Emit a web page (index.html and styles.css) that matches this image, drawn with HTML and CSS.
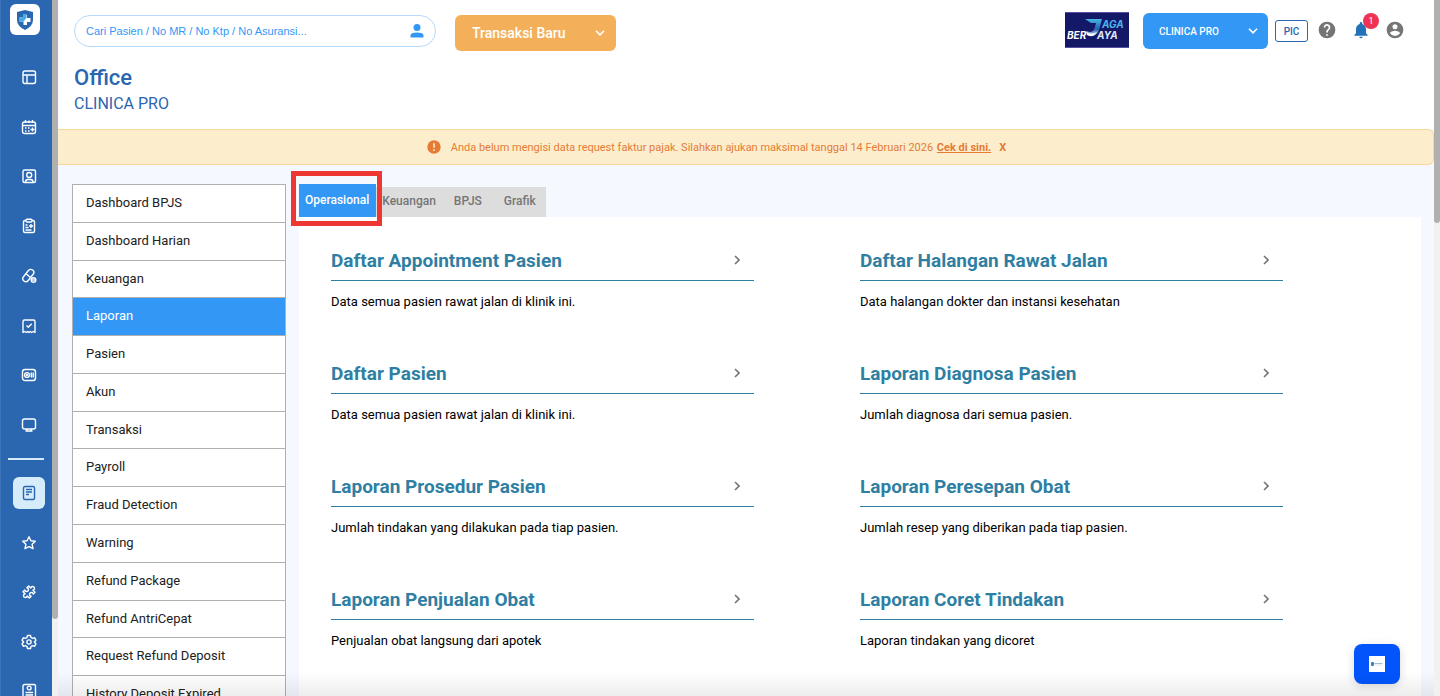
FILE: index.html
```html
<!doctype html>
<html lang="id">

<head>
  <meta charset="UTF-8">
  <title>Office - Clinica Pro</title>
  <link rel="stylesheet" href="styles.css">
</head>

<body>
  <aside class="sidebar">
    <a class="brand" href="#" aria-label="Home">
      <svg width="20" height="22" viewBox="0 0 20 22">
        <path d="M10 1 L18 3 V11 Q18 17 10 21 Q2 17 2 11 V3 Z" fill="#2b66b1"/>
        <path d="M8.500 6 h3.500 v3 h3.500 v4 h-3.500 v3 h-3.500 v-3.500 h-4 v-4 h4 z" fill="#fff"/>
        <path d="M8 5 h3.500 v4 l-3 3.500 h-4.500 v-4 h4 z" fill="#46aee6"/>
      </svg>
    </a>
    <nav class="nav-group nav-top" aria-label="Modules">
      <a href="#" aria-label="Dashboard"><svg class="icon" viewBox="0 0 16 16"><rect x="2" y="2" width="12.500" height="12.500" rx="2"/><path d="M2 6 H14.500 M6 6 V14.500"/></svg></a>
      <a href="#" aria-label="Appointment"><svg class="icon" viewBox="0 0 16 16"><rect x="1.500" y="3" width="13" height="11.500" rx="2"/><path d="M1.500 6.500 H14.500 M4.500 1 V4 M8 1.500 V4 M11.500 1 V4 M4 9 h1.500 M7 9 h1.500 M4 12 h1.500 M7 12 h1.500 M9.500 10.500 h4 M11.500 8.500 v4"/></svg></a>
      <a href="#" aria-label="Patients"><svg class="icon" viewBox="0 0 16 16"><rect x="2" y="2" width="12.500" height="12.500" rx="1.500"/><circle cx="8.200" cy="7" r="2.500"/><path d="M4.500 14 Q4.500 11.500 7 11.500 H9.500 Q12 11.500 12 14"/></svg></a>
      <a href="#" aria-label="Medical record"><svg class="icon" viewBox="0 0 16 16"><path d="M5 2.500 H4 Q2.500 2.500 2.500 4 V13 Q2.500 14.500 4 14.500 H12 Q13.500 14.500 13.500 13 V4 Q13.500 2.500 12 2.500 H11"/><rect x="5" y="1.200" width="6" height="2.800" rx="1"/><path d="M4.500 7 h2 M4.500 9.500 h3 M4.500 12 h6 M10 6 v4 M8 8 h4"/></svg></a>
      <a href="#" aria-label="Pharmacy"><svg class="icon" viewBox="0 0 16 16"><rect x="4.300" y="0.500" width="6" height="14" rx="3" transform="rotate(38 7.300 7.500)"/><path d="M5 5.800 L9.500 9.500"/><circle cx="12.500" cy="12" r="2.300"/><path d="M10.500 12 h4"/></svg></a>
      <a href="#" aria-label="Billing"><svg class="icon" viewBox="0 0 16 16"><path d="M2 14.500 V3.500 Q2 2 3.500 2 H12.500 Q14 2 14 3.500 V14.500 L12.300 13.500 L10.700 14.500 L9.300 13.500 L8 14.500 L6.700 13.500 L5.300 14.500 L3.700 13.500 Z M5.500 7.500 L7.300 9.300 L10.700 5.800"/></svg></a>
      <a href="#" aria-label="Cashier"><svg class="icon" viewBox="0 0 16 16"><rect x="1.500" y="2.500" width="13" height="11" rx="2.500"/><circle cx="6" cy="8" r="2.400"/><circle cx="6" cy="8" r="0.500"/><path d="M10.300 5.500 V10.500 M12.200 5.500 V10.500"/></svg></a>
      <a href="#" aria-label="Monitor"><svg class="icon" viewBox="0 0 16 16"><rect x="1.500" y="2" width="13" height="10" rx="2"/><path d="M6 12 L5.500 14 M10 12 L10.500 14 M4.500 14 H11.500"/></svg></a>
    </nav>
    <hr class="nav-line">
    <nav class="nav-group nav-bottom" aria-label="Tools">
      <a class="active" href="#" aria-label="Office"><svg class="icon" viewBox="0 0 16 16"><rect x="2.500" y="1.500" width="11" height="13" rx="1.500"/><path d="M5 4.500 h6 M5 7 h6 M5 9.500 h3"/></svg></a>
      <a href="#" aria-label="Favourites"><svg class="icon" viewBox="0 0 16 16"><path d="M8 1.800 L9.900 5.800 L14.300 6.300 L11.100 9.300 L12 13.700 L8 11.600 L4 13.700 L4.900 9.300 L1.700 6.300 L6.100 5.800 Z"/></svg></a>
      <a href="#" aria-label="Extensions"><svg class="icon" viewBox="0 0 16 16"><path transform="rotate(45 8 8)" d="M3.500 4 H6.500 A1.900 1.900 0 1 1 9.500 4 H12.500 V6.500 A1.900 1.900 0 1 0 12.500 9.500 V12 H9.500 A1.900 1.900 0 1 1 6.500 12 H3.500 V9.500 A1.900 1.900 0 1 0 3.500 6.500 Z"/></svg></a>
      <a href="#" aria-label="Settings"><svg class="icon" viewBox="0 0 16 16"><path d="M6.500 1.500 h3 l0.500 2 1.500 0.800 2 -0.600 1.400 2.500 -1.500 1.800 1.500 1.800 -1.400 2.500 -2 -0.600 -1.500 0.800 -0.500 2 h-3 l-0.500 -2 -1.500 -0.800 -2 0.600 -1.400 -2.500 1.500 -1.800 -1.500 -1.800 1.400 -2.500 2 0.600 1.500 -0.800 z"/><circle cx="8" cy="8" r="2.100"/></svg></a>
      <a href="#" aria-label="Profile"><svg class="icon" viewBox="0 0 16 16"><rect x="2" y="1.500" width="12.500" height="13" rx="1.500"/><circle cx="8.200" cy="5" r="1.900"/><path d="M4.500 9.500 h7.500 M4.500 12 h7.500"/></svg></a>
    </nav>
  </aside>
  <div class="scrollbar side-scroll"><i></i></div>

  <div class="page">
    <header class="header">
      <div class="topbar">
        <div class="search">
          <input type="search" placeholder="Cari Pasien / No MR / No Ktp / No Asuransi..." aria-label="Cari Pasien">
          <svg width="14" height="14" viewBox="0 0 14 14" fill="#3397f5"><circle cx="7" cy="3.500" r="3.500"/><path d="M0.500 13.500 V11.500 Q0.500 8.500 7 8.500 T13.500 11.500 V13.500 Z"/></svg>
        </div>
        <button class="btn btn-orange" type="button">Transaksi Baru
          <svg class="caret" viewBox="0 0 10 6"><path d="M1 0.800 L5 4.800 L9 0.800"/></svg>
        </button>

        <div class="account">
          <svg class="clinic-logo" width="64" height="36" viewBox="0 0 64 36" role="img" aria-label="Jaga Berjaya">
            <defs>
              <linearGradient id="swoosh" x1="0" y1="0" x2="0" y2="1">
                <stop offset="0" stop-color="#48b4e6"/>
                <stop offset="0.600" stop-color="#2561ad"/>
                <stop offset="1" stop-color="#e4edf8"/>
              </linearGradient>
            </defs>
            <rect width="64" height="36" fill="#131867"/>
            <path d="M0 0.500 H64 M0 35.500 H64" stroke="#5551a0"/>
            <path d="M20 7 H37 L34 18 Q31 25 25 24 Q22 23 22 19 Q28 22 30 15 L31 11 H26 Z" fill="url(#swoosh)"/>
            <path d="M21 19 Q25 24 32 20 Q27 26 22 23 Z" fill="#fff"/>
            <text x="37" y="16" fill="#4db4e7">AGA</text>
            <text x="2" y="27" fill="#fff">BER</text>
            <text x="32" y="27" fill="#dfe6f5">AYA</text>
          </svg>
          <button class="btn btn-blue" type="button">CLINICA PRO
            <svg class="caret" viewBox="0 0 10 6"><path d="M1 0.800 L5 4.800 L9 0.800"/></svg>
          </button>
          <button class="pic" type="button">PIC</button>
          <button class="icon-btn" type="button" aria-label="Help">
            <svg width="20" height="20" viewBox="0 0 24 24" fill="#757575"><path d="M12 2a10 10 0 1 0 0 20 10 10 0 0 0 0-20zm1 17h-2v-2h2v2zm2.100-7.700-.9.900C13.400 13 13 13.500 13 15h-2v-.5c0-1.100.4-2.100 1.200-2.800l1.200-1.300A2 2 0 1 0 10 9H8a4 4 0 1 1 7.100 2.300z"/></svg>
          </button>
          <button class="icon-btn" type="button" aria-label="Notifications">
            <svg width="20" height="20" viewBox="0 0 24 24" fill="#2271b9"><path d="M12 22a2 2 0 0 0 2-2h-4a2 2 0 0 0 2 2zm6-6v-5c0-3-1.600-5.600-4.500-6.300V4a1.500 1.500 0 0 0-3 0v.7C7.600 5.400 6 7.900 6 11v5l-2 2v1h16v-1l-2-2z"/></svg>
            <span class="badge">1</span>
          </button>
          <button class="icon-btn" type="button" aria-label="Account">
            <svg width="20" height="20" viewBox="0 0 24 24" fill="#757575"><path d="M12 2a10 10 0 1 0 0 20 10 10 0 0 0 0-20zm0 3a3 3 0 1 1 0 6 3 3 0 0 1 0-6zm0 14.200a7.200 7.200 0 0 1-6-3.200c0-2 4-3.100 6-3.100s6 1.100 6 3.100a7.200 7.200 0 0 1-6 3.200z"/></svg>
          </button>
        </div>
      </div>
      <h1>Office</h1>
      <p>CLINICA PRO</p>
    </header>

    <div class="notice" role="alert">
      <svg width="14" height="14" viewBox="0 0 14 14"><circle cx="7" cy="7" r="6.700" fill="#e67b35"/><path d="M7 3.200 V7.800 M7 9.300 V10.900" stroke="#fceecd" stroke-width="1.600"/></svg>
      <p>Anda belum mengisi data request faktur pajak. Silahkan ajukan maksimal tanggal 14 Februari 2026 <a href="#">Cek di sini.</a></p>
      <button type="button">X</button>
    </div>

    <main class="content">
      <nav class="menu" aria-label="Office">
        <a href="#">Dashboard BPJS</a>
        <a href="#">Dashboard Harian</a>
        <a href="#">Keuangan</a>
        <a class="active" href="#">Laporan</a>
        <a href="#">Pasien</a>
        <a href="#">Akun</a>
        <a href="#">Transaksi</a>
        <a href="#">Payroll</a>
        <a href="#">Fraud Detection</a>
        <a href="#">Warning</a>
        <a href="#">Refund Package</a>
        <a href="#">Refund AntriCepat</a>
        <a href="#">Request Refund Deposit</a>
        <a href="#">History Deposit Expired</a>
      </nav>

      <section class="reports">
        <div class="tabs" role="tablist">
          <button class="active" type="button" role="tab" aria-selected="true">Operasional</button>
          <button type="button" role="tab">Keuangan</button>
          <button type="button" role="tab">BPJS</button>
          <button type="button" role="tab">Grafik</button>
        </div>
        <div class="panel">
          <article class="report">
            <h2><a href="#">Daftar Appointment Pasien</a><svg class="chevron" viewBox="0 0 6 10"><path d="M1 1 L5 5 L1 9"/></svg></h2>
            <p>Data semua pasien rawat jalan di klinik ini.</p>
          </article>
          <article class="report">
            <h2><a href="#">Daftar Halangan Rawat Jalan</a><svg class="chevron" viewBox="0 0 6 10"><path d="M1 1 L5 5 L1 9"/></svg></h2>
            <p>Data halangan dokter dan instansi kesehatan</p>
          </article>
          <article class="report">
            <h2><a href="#">Daftar Pasien</a><svg class="chevron" viewBox="0 0 6 10"><path d="M1 1 L5 5 L1 9"/></svg></h2>
            <p>Data semua pasien rawat jalan di klinik ini.</p>
          </article>
          <article class="report">
            <h2><a href="#">Laporan Diagnosa Pasien</a><svg class="chevron" viewBox="0 0 6 10"><path d="M1 1 L5 5 L1 9"/></svg></h2>
            <p>Jumlah diagnosa dari semua pasien.</p>
          </article>
          <article class="report">
            <h2><a href="#">Laporan Prosedur Pasien</a><svg class="chevron" viewBox="0 0 6 10"><path d="M1 1 L5 5 L1 9"/></svg></h2>
            <p>Jumlah tindakan yang dilakukan pada tiap pasien.</p>
          </article>
          <article class="report">
            <h2><a href="#">Laporan Peresepan Obat</a><svg class="chevron" viewBox="0 0 6 10"><path d="M1 1 L5 5 L1 9"/></svg></h2>
            <p>Jumlah resep yang diberikan pada tiap pasien.</p>
          </article>
          <article class="report">
            <h2><a href="#">Laporan Penjualan Obat</a><svg class="chevron" viewBox="0 0 6 10"><path d="M1 1 L5 5 L1 9"/></svg></h2>
            <p>Penjualan obat langsung dari apotek</p>
          </article>
          <article class="report">
            <h2><a href="#">Laporan Coret Tindakan</a><svg class="chevron" viewBox="0 0 6 10"><path d="M1 1 L5 5 L1 9"/></svg></h2>
            <p>Laporan tindakan yang dicoret</p>
          </article>
        </div>
      </section>
    </main>
  </div>
  <div class="scrollbar page-scroll"><i></i></div>

  <button class="chat" type="button" aria-label="Chat">
    <svg width="16" height="16" viewBox="0 0 16 16"><rect width="16" height="16" fill="#fff"/><rect x="2" y="6" width="3" height="4" rx="1" fill="#3f82bd"/><path d="M5.500 7.500 H13.500" stroke="#9dbcd8"/><path d="M5.500 9 H13.500" stroke="#e0e8f0"/></svg>
  </button>
</body>

</html>
```

FILE: styles.css
```css
* {
  box-sizing: border-box;
  padding: 0;
  margin: 0;
}

body {
  display: flex;
  height: 100vh;
  overflow: hidden;
  font-family: Roboto, "Liberation Sans", sans-serif;
  font-size: 13px;
  color: #212121;
  background-color: #f5f9ff;
}

/* fade along the bottom of the window */
body::after {
  content: "";
  position: fixed;
  left: 58px;
  right: 6px;
  bottom: 0;
  height: 24px;
  background: linear-gradient(rgba(0, 0, 0, 0), rgba(0, 0, 0, 0.07));
  pointer-events: none;
}

a {
  color: inherit;
  text-decoration: none;
}

button {
  font-family: inherit;
  border: none;
  background: none;
  cursor: pointer;
}

svg {
  flex: none;
}

/* sidebar */
.sidebar {
  display: flex;
  flex-direction: column;
  flex: none;
  width: 52px;
  overflow: hidden;
  background-color: #2b66b1;
  border-left: 1px solid #3d74b9;
}

.brand {
  display: flex;
  flex: none;
  align-items: center;
  justify-content: center;
  width: 30px;
  height: 31px;
  margin: 4px 0 26px 9px;
  border-radius: 6px;
  background-color: #fff;
}

.nav-group {
  display: flex;
  flex: none;
  flex-direction: column;
  justify-content: space-between;
  padding-left: 12px;
}

  .nav-top {
    height: 380px;
  }

  .nav-bottom {
    height: 230px;
  }

  .nav-group a {
    display: flex;
    align-items: center;
    justify-content: center;
    width: 32px;
    height: 32px;
    border-radius: 6px;
    color: #fff;
  }

  .nav-group a.active {
    background-color: #d6ecfb;
    color: #2b66b1;
  }

.icon {
  width: 16px;
  height: 16px;
  fill: none;
  stroke: currentColor;
  stroke-width: 1.4;
  stroke-linejoin: round;
}

.nav-line {
  flex: none;
  width: 36px;
  height: 2px;
  margin: 17px 0 17px 7px;
  border: none;
  background-color: #d6ecfb;
}

/* scrollbars */
.scrollbar {
  flex: none;
  width: 6px;
  background-color: #f1f1f1;
}

  .scrollbar i {
    display: block;
    background-color: #b0b0b0;
  }

  .side-scroll i {
    height: 89%;
    border-radius: 0 0 3px 3px;
  }

  .page-scroll i {
    height: 32%;
    border-radius: 0 0 3px 3px;
  }

/* header */
.page {
  flex: 1;
  min-width: 0;
}

.header {
  height: 129px;
  padding: 12px 28px 0 16px;
  background-color: #fff;
  color: #2b66b1;
}

.topbar {
  display: flex;
  height: 52px;
}

.search {
  display: flex;
  align-items: center;
  width: 362px;
  height: 32px;
  margin: 3px 19px 0 0;
  padding: 0 11px 0 11px;
  border: 1px solid #b5dafb;
  border-radius: 16px;
}

  .search input {
    flex: 1;
    border: none;
    outline: none;
    background: none;
    font-family: "Liberation Sans", sans-serif;
    font-size: 11px;
    color: #3397f5;
  }

  .search input::placeholder {
    color: #3397f5;
  }

.btn {
  display: flex;
  align-items: center;
  justify-content: space-between;
  height: 36px;
  border-radius: 6px;
  color: #fff;
}

  .btn-orange {
    width: 161px;
    margin-top: 3px;
    padding: 0 11px 0 17px;
    background-color: #f4af5b;
    font-size: 14px;
    font-weight: 500;
  }

  .btn-blue {
    width: 125px;
    margin: 1px 7px 0 14px;
    padding: 0 10px 0 16px;
    background-color: #3397f5;
    font-size: 10px;
    font-weight: 500;
  }

.caret,
.chevron {
  fill: none;
  stroke: currentColor;
  stroke-width: 1.6;
}

.caret {
  width: 10px;
  height: 6px;
}

.account {
  display: flex;
  align-items: flex-start;
  margin-left: auto;
}

.clinic-logo text {
  font-family: Inter, sans-serif;
  font-size: 10px;
  font-style: italic;
  font-weight: 700;
}

.pic {
  width: 33px;
  height: 22px;
  margin: 8px 4px 0 0;
  border: 1px solid #2b66b1;
  border-radius: 3px;
  color: #2b66b1;
  font-size: 10px;
  font-weight: 500;
}

.icon-btn {
  display: flex;
  align-items: center;
  justify-content: center;
  position: relative;
  width: 30px;
  height: 36px;
  margin-right: 4px;
}

  .icon-btn:last-child {
    margin-right: -4px;
  }

.badge {
  position: absolute;
  top: 1px;
  right: -3px;
  width: 16px;
  height: 16px;
  border-radius: 8px;
  background-color: #ee3355;
  color: #fff;
  font-size: 9px;
  line-height: 16px;
}

.header h1 {
  font-size: 22px;
  font-weight: 500;
  line-height: 27px;
}

.header p {
  font-size: 16px;
  line-height: 26px;
}

/* tax invoice notice */
.notice {
  display: flex;
  align-items: center;
  justify-content: center;
  height: 36px;
  padding-right: 58px;
  border: 1px solid #f8d898;
  border-left: none;
  border-radius: 0 6px 6px 0;
  background-color: #fceecd;
  color: #e67b35;
  font-size: 11px;
}

  .notice svg {
    margin-right: 10px;
  }

  .notice a {
    margin-left: 1px;
    font-weight: 700;
    text-decoration: underline;
  }

  .notice button {
    margin-left: 8px;
    color: inherit;
    font-size: 11px;
    font-weight: 700;
  }

/* content */
.content {
  display: flex;
  align-items: flex-start;
  gap: 13px;
  padding: 19px 13px 0 14px;
}

.menu {
  display: grid;
  flex: none;
  grid-auto-rows: 1fr;
  width: 214px;
  height: 531px;
  border: 1px solid #b0b0b0;
  background-color: #fff;
}

  .menu a {
    padding-left: 13px;
    border-bottom: 1px solid #b0b0b0;
    font-size: 13px;
    line-height: 36px;
  }

  .menu a.active {
    background-color: #3397f5;
    color: #fff;
  }

.reports {
  flex: 1;
}

.tabs {
  display: flex;
  align-items: flex-end;
  height: 33px;
}

  .tabs button {
    min-width: 52px;
    height: 30px;
    padding: 0 6px 2px;
    background-color: #ddd;
    color: #757575;
    font-size: 12px;
    font-weight: 500;
  }

  .tabs button.active {
    position: relative;
    height: 33px;
    padding-right: 7px;
    background-color: #3397f5;
    color: #fff;
  }

  /* marker round the open tab */
  .tabs button.active::after {
    content: "";
    position: absolute;
    inset: -13px -6px -9px -8px;
    border: 5px solid #ee3733;
  }

.panel {
  display: grid;
  grid-template-columns: 1fr 1fr;
  grid-auto-rows: 113px;
  min-height: 600px;
  padding: 23px 32px 0;
  background-color: #fff;
}

.report {
  width: 80%;
  color: #000;
}

  .report h2 {
    display: flex;
    align-items: center;
    justify-content: space-between;
    height: 41px;
    padding-right: 14px;
    border-bottom: 1px solid #2f7fa3;
    color: #2f7fa3;
    font-size: 19px;
    font-weight: 700;
  }

  .report p {
    padding-top: 12px;
    font-size: 13px;
    line-height: 18px;
  }

.chevron {
  width: 6px;
  height: 10px;
  color: #757575;
}

/* chat button */
.chat {
  display: flex;
  align-items: center;
  justify-content: center;
  position: fixed;
  right: 40px;
  bottom: 12px;
  width: 46px;
  height: 40px;
  border-radius: 8px;
  background-color: #0355fb;
  box-shadow: 0 2px 10px rgba(0, 0, 0, 0.15);
}
```
